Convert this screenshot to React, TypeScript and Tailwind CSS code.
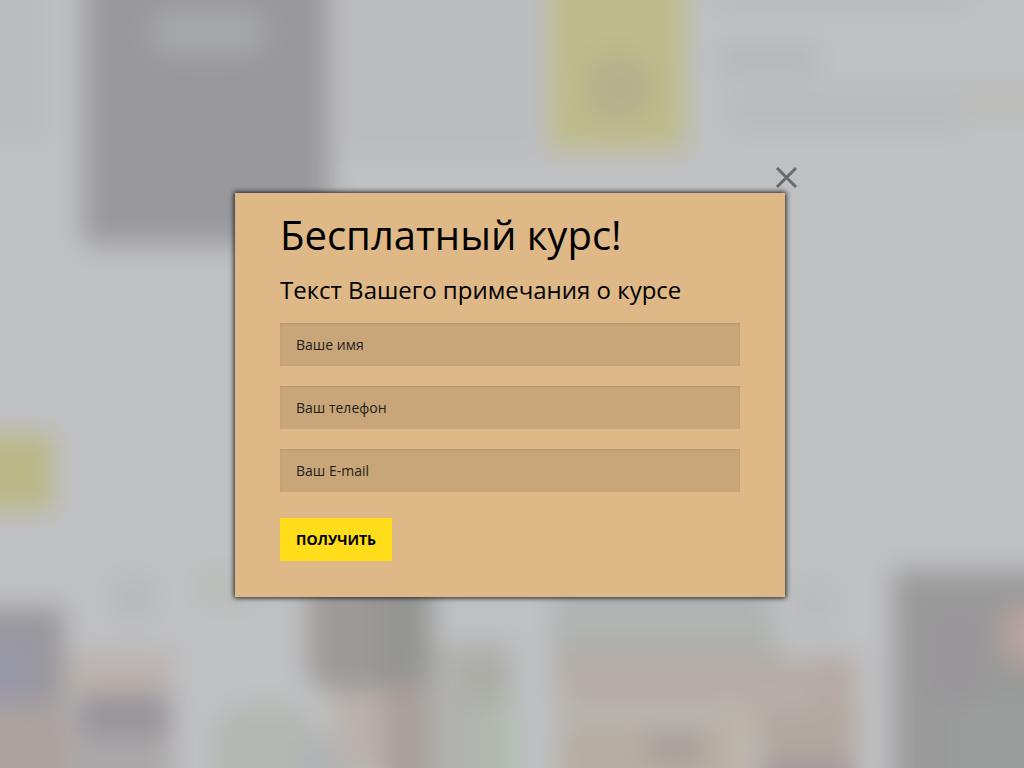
import { useState } from "react";

type Shape = { x: number; y: number; w: number; h: number; fill: string; r?: number };

const SHAPES: Shape[] = [
  { x: -60, y: -60, w: 108, h: 200, fill: "#bbbcc0" },
  { x: 340, y: -60, w: 200, h: 215, fill: "#bbbcc0" },
  { x: 84, y: -60, w: 245, h: 304, fill: "#99989c" },
  { x: 150, y: 10, w: 116, h: 44, fill: "#a6a8a8", r: 22 },
  { x: 550, y: -60, w: 134, h: 210, fill: "#bebc8a" },
  { x: 584, y: 54, w: 70, h: 68, fill: "#b4b18d", r: 34 },
  { x: 716, y: -20, w: 250, h: 26, fill: "#b8b9bb" },
  { x: 720, y: 46, w: 96, h: 28, fill: "#b5b6b9" },
  { x: 730, y: 88, w: 230, h: 44, fill: "#babbbc" },
  { x: 960, y: 84, w: 110, h: 34, fill: "#bcbcbb" },
  { x: -60, y: 434, w: 112, h: 76, fill: "#bab887" },
  { x: 112, y: 576, w: 42, h: 44, fill: "#b7b8ba", r: 20 },
  { x: 196, y: 566, w: 60, h: 44, fill: "#bcbebb" },
  { x: -60, y: 608, w: 124, h: 96, fill: "#9a989d" },
  { x: -60, y: 640, w: 96, h: 64, fill: "#9998a6" },
  { x: -60, y: 704, w: 132, h: 140, fill: "#aca29f" },
  { x: 64, y: 652, w: 108, h: 44, fill: "#bbb3ae" },
  { x: 78, y: 694, w: 92, h: 44, fill: "#99949a" },
  { x: 74, y: 738, w: 98, h: 110, fill: "#aba8a9" },
  { x: 212, y: 704, w: 110, h: 140, fill: "#b5b7b3", r: 40 },
  { x: 300, y: 740, w: 60, h: 100, fill: "#afb3b4" },
  { x: 308, y: 570, w: 120, h: 122, fill: "#9d9a97", r: 30 },
  { x: 372, y: 570, w: 60, h: 114, fill: "#959592" },
  { x: 334, y: 690, w: 62, h: 80, fill: "#bbb1ac", r: 20 },
  { x: 384, y: 686, w: 46, h: 160, fill: "#a99f9b" },
  { x: 430, y: 644, w: 82, h: 210, fill: "#b1b2af" },
  { x: 464, y: 650, w: 38, h: 50, fill: "#abaca4" },
  { x: 484, y: 706, w: 30, h: 120, fill: "#b0bbae" },
  { x: 554, y: 570, w: 218, h: 80, fill: "#afb4b3" },
  { x: 554, y: 634, w: 226, h: 34, fill: "#b0b0ab" },
  { x: 556, y: 660, w: 298, h: 38, fill: "#b6aca6" },
  { x: 810, y: 656, w: 46, h: 64, fill: "#b6aaa4" },
  { x: 558, y: 696, w: 206, h: 38, fill: "#b7b3ac" },
  { x: 760, y: 704, w: 96, h: 150, fill: "#b1a89f" },
  { x: 558, y: 732, w: 170, h: 110, fill: "#b7ada2" },
  { x: 648, y: 736, w: 54, h: 24, fill: "#a59b97" },
  { x: 722, y: 714, w: 28, h: 90, fill: "#bdb5a7" },
  { x: 760, y: 762, w: 92, h: 80, fill: "#a3979a" },
  { x: 800, y: 584, w: 30, h: 44, fill: "#b9babc" },
  { x: 894, y: 570, w: 200, h: 290, fill: "#9a9a9a" },
  { x: 930, y: 606, w: 54, h: 90, fill: "#999599", r: 20 },
  { x: 1000, y: 604, w: 90, h: 62, fill: "#b9a39f", r: 30 },
  { x: 960, y: 704, w: 100, h: 120, fill: "#9b9d9d" },
];

function Backdrop() {
  return (
    <svg
      aria-hidden="true"
      className="pointer-events-none absolute inset-0 h-full w-full"
      viewBox="0 0 1024 768"
      preserveAspectRatio="xMidYMid slice"
    >
      <defs>
        <filter id="soft" x="-100" y="-100" width="1224" height="968" filterUnits="userSpaceOnUse" colorInterpolationFilters="sRGB">
          <feGaussianBlur stdDeviation="13" />
        </filter>
      </defs>
      <g filter="url(#soft)">
        <rect x="-100" y="-100" width="1224" height="968" fill="#bfc0c2" />
        {SHAPES.map((s, i) => (
          <rect key={i} x={s.x} y={s.y} width={s.w} height={s.h} rx={s.r} fill={s.fill} />
        ))}
      </g>
    </svg>
  );
}

const FIELDS = [
  { name: "name", type: "text", label: "Ваше имя" },
  { name: "phone", type: "tel", label: "Ваш телефон" },
  { name: "email", type: "email", label: "Ваш E-mail" },
];

export default function App() {
  const [open, setOpen] = useState(true);

  return (
    <main className="relative flex min-h-screen items-center justify-center overflow-hidden bg-[#bfc0c2] pt-[22px] pr-1 font-['Open_Sans','Noto_Sans',sans-serif] text-black">
      <Backdrop />
      {open && (
        <section
          role="dialog"
          aria-labelledby="dialog-title"
          className="relative w-full max-w-[550px] bg-[#deb887] px-[45px] pt-[14px] pb-9 shadow-[0_0_5px_1px_#1f1f24]"
        >
          <button
            type="button"
            aria-label="Закрыть"
            onClick={() => setOpen(false)}
            className="absolute -top-7 -right-[13px] cursor-pointer text-[#68696a]"
          >
            <svg width="23" height="24" viewBox="0 0 23 24" fill="none" stroke="currentColor" strokeWidth="3">
              <path d="M2 3 21 22M21 3 2 22" />
            </svg>
          </button>
          <h1 id="dialog-title" className="text-[40px] leading-14">
            Бесплатный курс!
          </h1>
          <p className="mt-[7px] mb-[13px] text-[24px] leading-10">Текст Вашего примечания о курсе</p>
          <form onSubmit={(e) => e.preventDefault()}>
            <div className="flex flex-col gap-5">
              {FIELDS.map((f) => (
                <input
                  key={f.name}
                  name={f.name}
                  type={f.type}
                  aria-label={f.label}
                  placeholder={f.label}
                  className="h-[43px] w-full bg-[#c8a679] px-4 text-[14px] shadow-[inset_0_1px_2px_rgba(0,0,0,0.1)] outline-none placeholder:text-[#231e18]"
                />
              ))}
            </div>
            <button
              type="submit"
              className="mt-[26px] block h-[43px] cursor-pointer bg-[#ffdd1b] px-4 text-[14px] font-bold uppercase"
            >
              Получить
            </button>
          </form>
        </section>
      )}
    </main>
  );
}
